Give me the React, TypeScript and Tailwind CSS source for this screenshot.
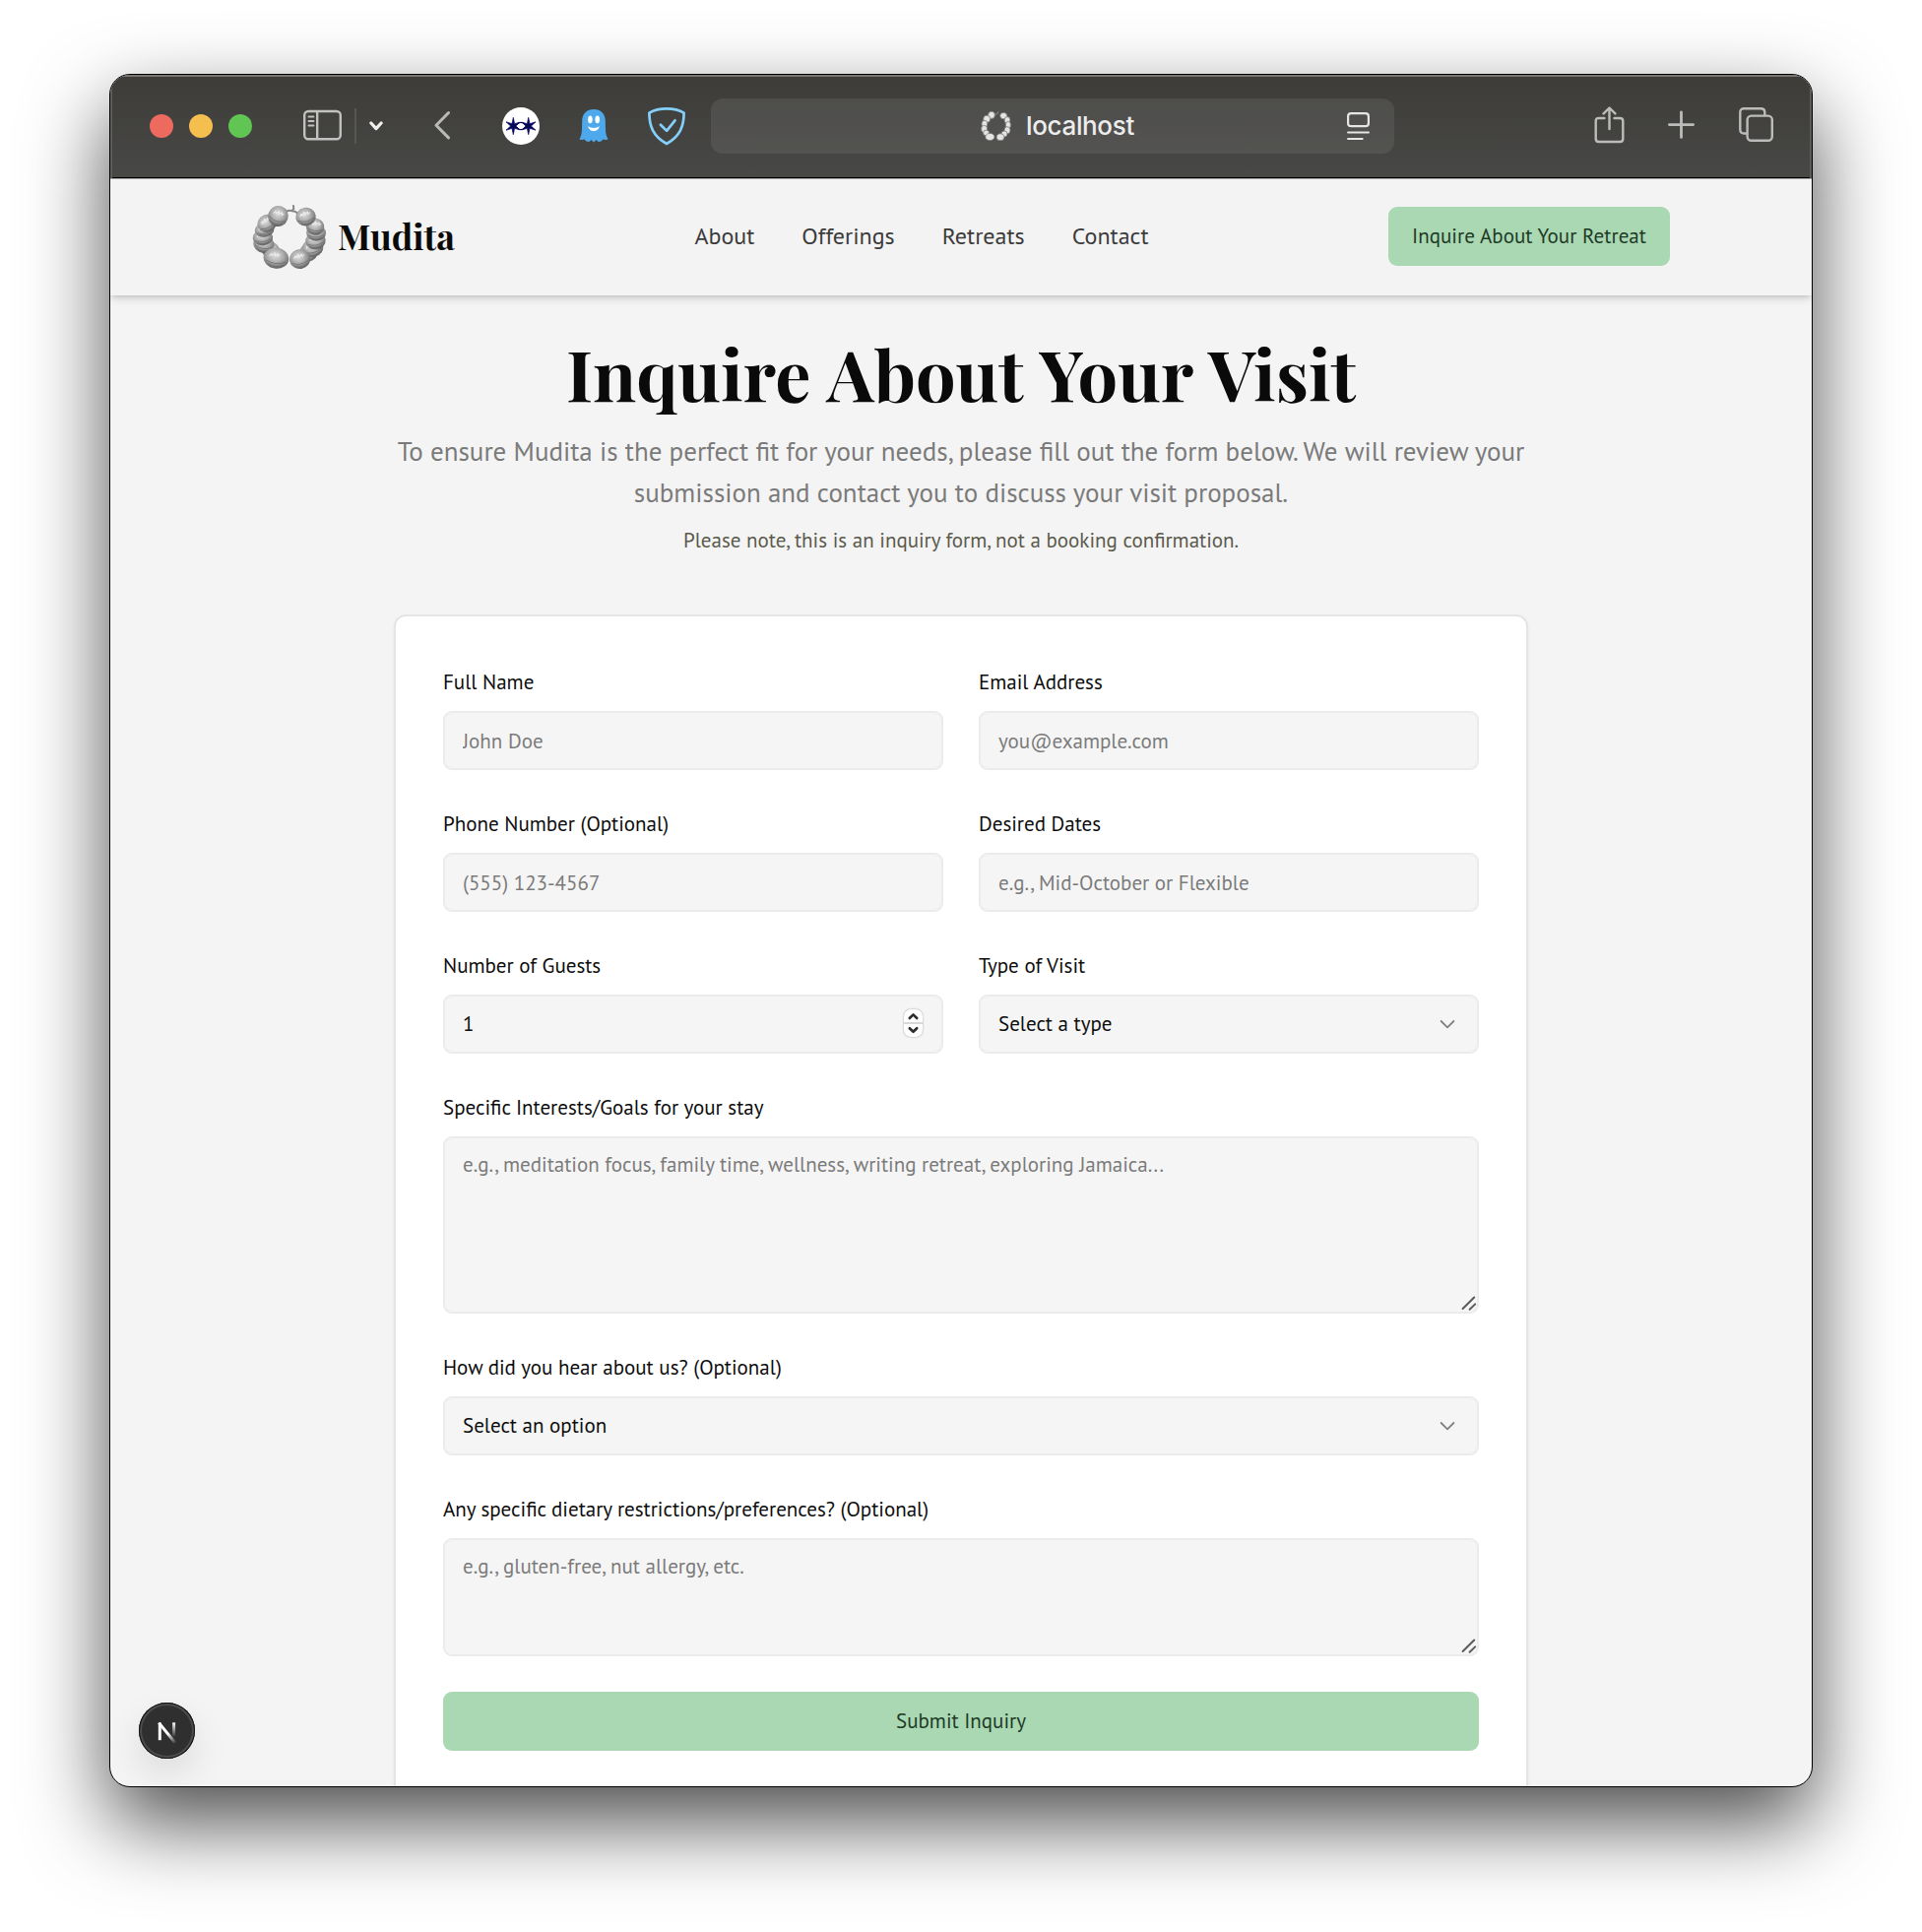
import React from "react";

const sans = "font-['PT_Sans','Open_Sans',sans-serif]";
const serif = "font-['Playfair_Display','Liberation_Serif',serif]";

/* Segments of the seed-pod ring: centre, radii and tilt, in drawing order. */
const pods: [number, number, number, number, number][] = [
  [104, 192, 28, 26, 30],
  [82, 172, 32, 27, 10],
  [79, 152, 31, 24, -5],
  [84, 128, 30, 22, -10],
  [92, 108, 30, 27, -25],
  [126, 86, 31, 32, 20],
  [120, 215, 39, 32, 8],
  [219, 198, 30, 27, -30],
  [232, 184, 33, 28, -15],
  [241, 162, 31, 26, -8],
  [243, 138, 30, 24, 0],
  [240, 118, 28, 26, 10],
  [211, 88, 31, 28, -10],
  [193, 218, 32, 30, -10],
];

function PodRing({ className }: { className: string }) {
  return (
    <svg className={className} viewBox="46 46 230 204" fill="none">
      <defs>
        <radialGradient id="pod" cx="0.45" cy="0.38" r="0.66">
          <stop offset="0" stopColor="#dedede" />
          <stop offset="0.45" stopColor="#b2b2b2" />
          <stop offset="0.8" stopColor="#808080" />
          <stop offset="1" stopColor="#4e4e4e" />
        </radialGradient>
      </defs>
      <path
        d="M148 74Q158 65 168 70L174 64L173 54M168 70Q178 69 186 77"
        stroke="#858585"
        strokeWidth="6"
        strokeLinecap="round"
      />
      {pods.map(([cx, cy, rx, ry, a]) => (
        <g key={`${cx}-${cy}`} transform={`translate(${cx} ${cy}) rotate(${a})`}>
          <ellipse rx={rx} ry={ry} fill="url(#pod)" />
          <path
            d={`M${-rx * 0.55} ${-ry * 0.1}l5 -9l3 7l7 -11l2 10l8 -9l1 9l6 -6`}
            stroke="#f4f4f4"
            strokeWidth="2.600"
            strokeLinejoin="round"
          />
          <path
            d={`M${-rx * 0.8} ${ry * 0.3}Q0 ${ry * 0.75} ${rx * 0.8} ${ry * 0.25}M${-rx * 0.6} ${ry * 0.62}Q0 ${ry} ${rx * 0.6} ${ry * 0.6}`}
            stroke="#555"
            strokeWidth="2.500"
            opacity="0.55"
          />
        </g>
      ))}
    </svg>
  );
}

function SiteIcon() {
  return (
    <svg className="h-8 w-[31px]" viewBox="0 0 31 32" fill="none">
      <g fill="#e4e4e3" stroke="#7c7c7a" strokeWidth="0.8">
        <ellipse cx="11" cy="4.800" rx="3.400" ry="3.600" />
        <ellipse cx="6.200" cy="8.800" rx="3.500" ry="3.600" />
        <ellipse cx="3.900" cy="13.800" rx="2.900" ry="3.500" />
        <ellipse cx="3.600" cy="19" rx="3" ry="3.700" />
        <ellipse cx="5.600" cy="23" rx="3" ry="2.800" />
        <ellipse cx="9.400" cy="27" rx="4.600" ry="3.600" />
        <ellipse cx="23.200" cy="5.600" rx="3.500" ry="3.200" />
        <ellipse cx="27" cy="10" rx="2.900" ry="3.400" />
        <ellipse cx="27.900" cy="15" rx="2.600" ry="3.600" />
        <ellipse cx="27" cy="20.200" rx="3" ry="3.500" />
        <ellipse cx="24" cy="24" rx="3" ry="3" />
        <ellipse cx="20" cy="27.200" rx="3.900" ry="3.500" />
      </g>
      <path d="M15 4l2 -.4l.9 -2.200" stroke="#8a8a88" strokeWidth="1" />
    </svg>
  );
}

function Toolbar() {
  return (
    <div className="flex h-[106px] shrink-0 items-center border-b border-b-[#a9a9a9] bg-linear-to-b from-[#3d3c39] to-[#484846] pb-0.5 pl-10 shadow-[inset_0_2px_0_#77776f,inset_2px_0_0_#5c5c5a,inset_-2px_0_0_#5c5c5a,inset_0_-1px_0_#000]">
      <div className="flex gap-4">
        <span className="size-6 rounded-full bg-[#ed6a5e]" />
        <span className="size-6 rounded-full bg-[#f5bf4f]" />
        <span className="size-6 rounded-full bg-[#61c554]" />
      </div>

      <svg className="ml-[52px] h-10 w-[39px]" viewBox="0 0 39 40" fill="none" stroke="#c1c1c0" strokeWidth="2.400">
        <rect x="1.200" y="5" width="36.600" height="28.200" rx="4" />
        <path d="M14.200 5v28" />
        <path d="M5.500 10.500h5M5.500 15h5M5.500 19.500h5" strokeWidth="1.900" strokeLinecap="round" />
      </svg>
      <span className="ml-[13px] h-9 w-0.5 bg-[#565654]" />
      <svg className="ml-[13px] h-10 w-[14px]" viewBox="0 0 14 40" fill="none" stroke="#efefef" strokeWidth="3.200" strokeLinecap="round" strokeLinejoin="round">
        <path d="M1.900 17l5.100 5.600L12.100 17" />
      </svg>
      <svg className="ml-[52px] h-10 w-4" viewBox="0 0 16 40" fill="none" stroke="#b9b9b8" strokeWidth="3" strokeLinecap="round" strokeLinejoin="round">
        <path d="M14.500 6.500L2 19.200l12.500 12.700" />
      </svg>

      <svg className="ml-[53px] size-[38px]" viewBox="0 0 38 38">
        <circle cx="19" cy="19" r="19" fill="#fff" />
        <g fill="#06065a" stroke="#06065a" strokeWidth="0.7" strokeLinejoin="round">
          <path d="M11.300 10.300L12.600 16.700L17.800 15.200L14 19L17.800 22.800L12.600 21.300L11.300 27.700L10 21.300L4 23.200L8.600 19L4 14.800L10 16.700z" />
          <path d="M26.700 10.300L28 16.700L34 14.800L29.400 19L34 23.200L28 21.300L26.700 27.700L25.400 21.300L20.200 22.800L24 19L20.200 15.200L25.400 16.700z" />
        </g>
        <path d="M14.500 17.500Q19 13.200 23.500 17.500M14.500 20.500Q19 24.800 23.500 20.500" fill="none" stroke="#06065a" strokeWidth="1.300" />
        <circle cx="19" cy="19" r="2.600" fill="#fff" />
      </svg>

      <svg className="ml-10 h-10 w-[30px]" viewBox="0 0 30 40">
        <path
          d="M15 3C7.800 3 3.400 7.500 3.200 14.500L3 24c-.1 3.500-1 6.500-2.600 9.600 2 .8 3.500.6 5-.4 1.200 1.800 2.400 2.700 4.200 2.900 1.300-.2 2-1 2.700-2 .9 1 1.700 1.600 2.700 2.400 1-.8 1.800-1.400 2.700-2.400.7 1 1.400 1.800 2.700 2 1.800-.2 3-1.100 4.200-2.900 1.500 1 3 1.200 5 .4C28 30.500 27.100 27.500 27 24l-.2-9.500C26.600 7.500 22.200 3 15 3z"
          fill="#4da9ec"
        />
        <ellipse cx="11.400" cy="13.400" rx="2.300" ry="3.800" fill="#fff" />
        <ellipse cx="18.700" cy="13.400" rx="2.300" ry="3.800" fill="#fff" />
        <path d="M9 20.300q6 3.400 12 0-1.600 4.900-6 4.900t-6-4.900z" fill="#fff" />
      </svg>

      <svg className="ml-10 h-10 w-[38px]" viewBox="0 0 38 40" fill="none" stroke="#85d0fb" strokeWidth="2.700" strokeLinecap="round" strokeLinejoin="round">
        <path d="M19 2.400c6.400 0 12.200 1 17.600 4.200 0 13.800-4 23.800-17.600 31.400C5.400 30.400 1.400 20.400 1.400 6.600 6.800 3.400 12.600 2.400 19 2.400z" />
        <path d="M12.900 18.800l6.200 6.100 8.400-10.600" />
      </svg>

      <div className="ml-[26px] flex h-14 w-[694px] items-center rounded-xl bg-white/8 pr-[25px] pl-[274px]">
        <SiteIcon />
        <span className="ml-[15px] font-['Inter',sans-serif] text-[26px] leading-8 font-[450] tracking-[-0.35px] text-[#ededed]">localhost</span>
        <svg className="ml-auto h-10 w-[23px]" viewBox="0 0 23 40" fill="none" stroke="#e6e6e5" strokeWidth="2.200" strokeLinecap="round">
          <rect x="1.100" y="7.200" width="20.800" height="13" rx="3" />
          <path d="M1.100 26.500h20.800M1.100 33h14.500" />
        </svg>
      </div>

      <svg className="ml-[203px] h-10 w-[31px]" viewBox="0 0 31 40" fill="none" stroke="#bcbcbb" strokeWidth="2.400" strokeLinecap="round" strokeLinejoin="round">
        <path d="M10.500 12H4.700Q1.700 12 1.700 15v18q0 3 3 3h21.600q3 0 3-3V15q0-3-3-3H20.500" />
        <path d="M15.500 23V1.800M9.600 7.400l5.900-5.900 5.900 5.900" />
      </svg>
      <svg className="ml-11 h-10 w-[27px]" viewBox="0 0 27 40" fill="none" stroke="#bcbcbb" strokeWidth="2.800" strokeLinecap="round">
        <path d="M13.500 6v25.400M1.400 18.600h24.200" />
      </svg>
      <svg className="ml-[45px] h-10 w-[35px]" viewBox="0 0 35 40" fill="none" stroke="#bcbcbb" strokeWidth="2.400" strokeLinejoin="round">
        <path d="M8.400 27.500H5.200Q1.300 27.500 1.300 23.600V6.200Q1.300 2.300 5.200 2.300H22.400Q26.300 2.300 26.300 6.200V9.400" />
        <rect x="8.600" y="9.600" width="25.200" height="25.200" rx="4" />
      </svg>
    </div>
  );
}

function SiteHeader() {
  return (
    <header className="relative z-10 flex h-[118px] shrink-0 items-center justify-between bg-[#f3f3f3] px-36 pb-0.5 shadow-[0_6px_8px_-2px_rgba(0,0,0,0.12),0_2px_4px_-1px_rgba(0,0,0,0.12)]">
      <div className="flex items-center gap-[11px]">
        <PodRing className="h-[68px] w-[76px]" />
        <span className={`${serif} pb-0.5 text-[36px] leading-[54px] font-bold text-[#0a0a0a]`}>Mudita</span>
      </div>
      <nav className="flex gap-12 text-2xl leading-9 text-[#3b3b3b]">
        {["About", "Offerings", "Retreats", "Contact"].map((item) => (
          <a key={item}>{item}</a>
        ))}
      </nav>
      <button className="flex h-[60px] w-[286px] items-center justify-center rounded-[9px] bg-[#a9d8b3] text-[21px] tracking-[0.05px] text-[#1e3a26]">
        Inquire About Your Retreat
      </button>
    </header>
  );
}

const box =
  "block w-full rounded-[9px] border-2 border-[#ebebeb] bg-[#f5f5f5] px-[18px] text-[21px] text-[#0d0d0d] placeholder:text-[#7b7b7b] placeholder:opacity-100 outline-none";

function Field({ label, children }: { label: string; children: React.ReactNode }) {
  return (
    <div>
      <label className="mb-[11px] block pt-px text-[21px] leading-9 text-[#0d0d0d]">{label}</label>
      {children}
    </div>
  );
}

function Text({ placeholder, value }: { placeholder?: string; value?: string }) {
  return (
    <input
      className={`${box} h-[60px] ${value ? "pb-0.5" : "pb-0"}`}
      placeholder={placeholder}
      defaultValue={value}
    />
  );
}

function Stepper() {
  return (
    <span className="absolute top-[15px] right-[21px] flex h-7 w-[19px] flex-col items-center rounded-[7px] bg-white shadow-[0_0_2px_rgba(0,0,0,0.4)]">
      <svg className="size-full" viewBox="0 0 19 28" fill="none" stroke="#2c2c2c" strokeWidth="2.600" strokeLinecap="round" strokeLinejoin="round">
        <path d="M5.800 9L9.500 5.400 13.200 9M5.800 19.200l3.700 3.600 3.700-3.600" />
        <path d="M0 14h19" stroke="#cfcfcf" strokeWidth="1.600" strokeLinecap="butt" />
      </svg>
    </span>
  );
}

function Select({ text }: { text: string }) {
  return (
    <button className={`${box} flex! h-[60px] items-center justify-between pr-[22px]! text-left`}>
      {text}
      <svg className="h-3 w-4" viewBox="0 0 16 12" fill="none" stroke="#808080" strokeWidth="1.800" strokeLinecap="round" strokeLinejoin="round">
        <path d="M1.600 3L8 9.300 14.400 3" />
      </svg>
    </button>
  );
}

function Area({ placeholder, height }: { placeholder: string; height: string }) {
  return (
    <div className="relative">
      <textarea className={`${box} ${height} resize-none pt-3 leading-[30px]`} placeholder={placeholder} />
      <svg className="absolute right-0.5 bottom-0.5 size-4" viewBox="0 0 16 16" stroke="#5b5b5b" strokeWidth="2" strokeLinecap="round">
        <path d="M1.600 13L13.200 1.500M8.600 13.800l5.600-5.400" />
      </svg>
    </div>
  );
}

function NextBadge() {
  return (
    <div className="absolute bottom-7 left-[29px] z-20 flex size-[57px] items-center justify-center rounded-full bg-[#2f2f2f] shadow-[inset_0_0_0_1px_#141414,inset_0_0_0_3px_#4c4c4c,0_16px_40px_-4px_rgba(0,0,0,0.14)]">
      <svg className="size-[57px]" viewBox="0 0 57 57" fill="none">
        <defs>
          <linearGradient id="stem" gradientUnits="userSpaceOnUse" x1="0" y1="20" x2="0" y2="35">
            <stop offset="0" stopColor="#fff" />
            <stop offset="1" stopColor="#fff" stopOpacity="0" />
          </linearGradient>
          <linearGradient id="diag" gradientUnits="userSpaceOnUse" x1="30" y1="31" x2="38" y2="41">
            <stop offset="0" stopColor="#fff" />
            <stop offset="1" stopColor="#fff" stopOpacity="0" />
          </linearGradient>
        </defs>
        <path d="M21.300 38.200V20.500" stroke="#fff" strokeWidth="3" />
        <path d="M20.400 20.600L37 41" stroke="url(#diag)" strokeWidth="3" />
        <path d="M35.600 20.300V35" stroke="url(#stem)" strokeWidth="3" />
      </svg>
    </div>
  );
}

export default function App() {
  return (
    <div className={`${sans} flex h-[1962px] w-[1952px] justify-center overflow-hidden bg-white pt-[75px]`}>
      <div className="relative flex h-[1740px] w-[1730px] flex-col overflow-hidden rounded-[21px] border border-black bg-[#f4f4f4] shadow-[0_36px_84px_rgba(0,0,0,0.7)]">
        <Toolbar />
        <SiteHeader />
        <main className="mx-auto w-[1152px] pt-[42px]">
          <div className="text-center">
            <h1 className={`${serif} text-[72px] leading-[72px] font-bold whitespace-nowrap text-[#0a0a0a] [word-spacing:2.200px]`}>
              Inquire About Your Visit
            </h1>
            <p className="mt-[23px] text-[27px] leading-[42px] text-[#7a7a7a]">
              To ensure Mudita is the perfect fit for your needs, please fill out the form below. We will review your
              submission and contact you to discuss your visit proposal.
            </p>
            <p className="mt-[13px] text-[21px] leading-[30px] text-[#5b5a4c]">
              Please note, this is an inquiry form, not a booking confirmation.
            </p>
          </div>

          <form className="mt-[60px] flex flex-col gap-9 rounded-xl border-2 border-[#e5e5e5] bg-white p-12 shadow-[0_2px_4px_rgba(0,0,0,0.05)]">
            <div className="grid grid-cols-2 gap-9">
              <Field label="Full Name">
                <Text placeholder="John Doe" />
              </Field>
              <Field label="Email Address">
                <Text placeholder="you@example.com" />
              </Field>
              <Field label="Phone Number (Optional)">
                <Text placeholder="(555) 123-4567" />
              </Field>
              <Field label="Desired Dates">
                <Text placeholder="e.g., Mid-October or Flexible" />
              </Field>
              <Field label="Number of Guests">
                <div className="relative">
                  <Text value="1" />
                  <Stepper />
                </div>
              </Field>
              <Field label="Type of Visit">
                <Select text="Select a type" />
              </Field>
            </div>
            <Field label="Specific Interests/Goals for your stay">
              <Area placeholder="e.g., meditation focus, family time, wellness, writing retreat, exploring Jamaica..." height="h-[180px]" />
            </Field>
            <Field label="How did you hear about us? (Optional)">
              <Select text="Select an option" />
            </Field>
            <Field label="Any specific dietary restrictions/preferences? (Optional)">
              <Area placeholder="e.g., gluten-free, nut allergy, etc." height="h-[120px]" />
            </Field>
            <button className="h-[60px] rounded-[9px] bg-[#a9d8b3] text-[21px] text-[#1e3a26]">Submit Inquiry</button>
          </form>
        </main>
        <NextBadge />
      </div>
    </div>
  );
}
